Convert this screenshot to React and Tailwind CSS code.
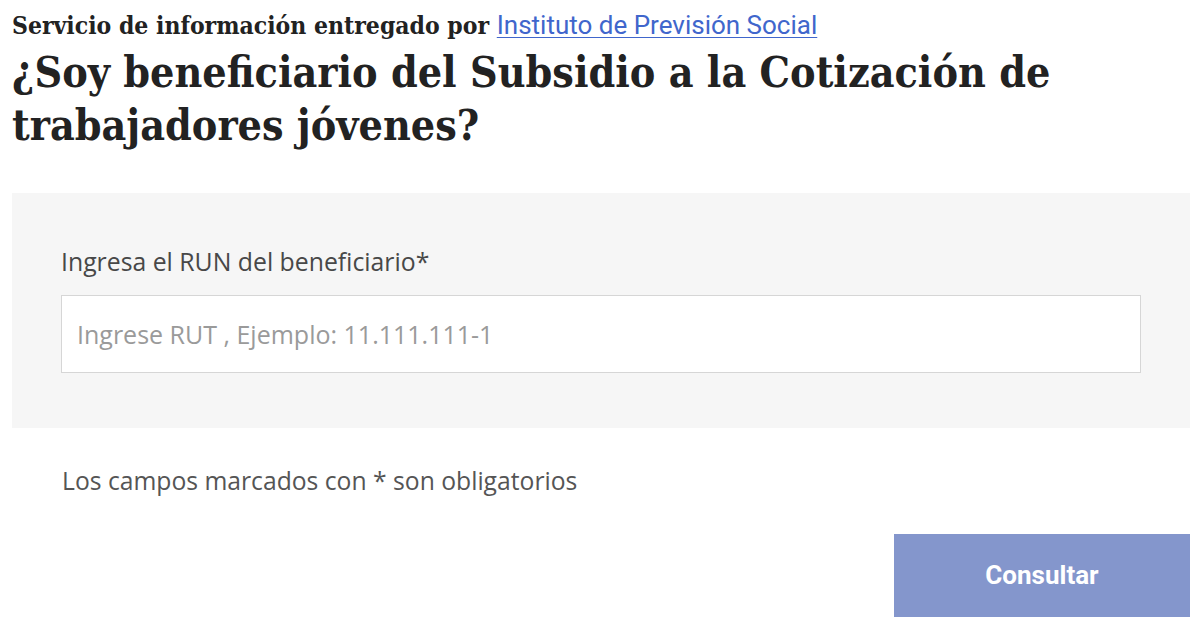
export default function App() {
  return (
    <main className="min-h-screen bg-white px-3 pt-[10px]">
      {/* Header */}
      <p className="text-[24.5px] leading-[30px] font-bold text-[#222222] font-['DejaVu_Serif_Condensed','DejaVu_Serif',serif]">
        Servicio de información entregado por{" "}
        <a
          href="#"
          className="text-[26px] font-normal text-[#4066cc] underline underline-offset-[3px] decoration-1 font-['Roboto','Liberation_Sans',sans-serif]"
        >
          Instituto de Previsión Social
        </a>
      </p>
      <h1 className="mt-[5px] text-[42.6px] leading-[53px] font-bold text-[#222222] font-['DejaVu_Serif_Condensed','DejaVu_Serif',serif]">
        ¿Soy beneficiario del Subsidio a la Cotización de
        <br />
        trabajadores jóvenes?
      </h1>

      {/* Form */}
      <div className="mt-[41px] mr-[-2px] bg-[#f6f6f6] px-[49px] pt-[53px] pb-[55px] font-['Open_Sans',sans-serif]">
        <label className="block mb-[19px] text-[24.8px] leading-[30px] text-[#484848]">
          Ingresa el RUN del beneficiario*
        </label>
        <input
          className="block w-full h-[78px] bg-white border border-[#d6d6d6] px-[15px] text-[25px] text-[#444444] placeholder:text-[#9a9a9a] outline-none"
          placeholder="Ingrese RUT , Ejemplo: 11.111.111-1"
        />
      </div>

      <p className="mt-[38px] pl-[50px] text-[24.7px] leading-[30px] text-[#555555] font-['Open_Sans',sans-serif]">
        Los campos marcados con * son obligatorios
      </p>

      <div className="flex justify-end mt-[38px] mr-[-2px]">
        <button className="w-[296px] h-[83px] bg-[#8496cc] text-white text-[26px] font-bold font-['Roboto','Liberation_Sans',sans-serif]">
          Consultar
        </button>
      </div>
    </main>
  );
}
